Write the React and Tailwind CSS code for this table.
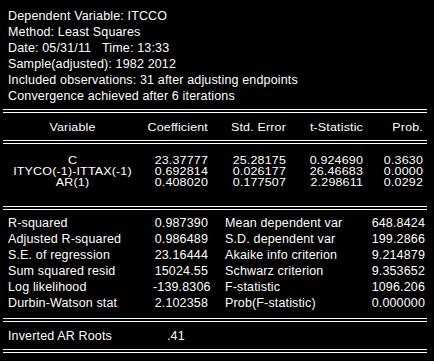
import React from "react";

const font = { fontFamily: '"Liberation Sans", Arial, sans-serif' };

function DoubleLine({ className = "" }) {
  return <div className={"mx-[3px] w-[424px] h-[4px] border-t border-b border-white " + className} />;
}

const coefRows = [
  ["C", "23.37777", "25.28175", "0.924690", "0.3630"],
  ["ITYCO(-1)-ITTAX(-1)", "0.692814", "0.026177", "26.46683", "0.0000"],
  ["AR(1)", "0.408020", "0.177507", "2.298611", "0.0292"],
];

const statRows = [
  ["R-squared", "0.987390", "Mean dependent var", "648.8424"],
  ["Adjusted R-squared", "0.986489", "S.D. dependent var", "199.2866"],
  ["S.E. of regression", "23.16444", "Akaike info criterion", "9.214879"],
  ["Sum squared resid", "15024.55", "Schwarz criterion", "9.353652"],
  ["Log likelihood", "-139.8306", "F-statistic", "1096.206"],
  ["Durbin-Watson stat", "2.102358", "Prob(F-statistic)", "0.000000"],
];

export default function App() {
  return (
    <div
      className="w-[434px] h-[361px] bg-black text-white text-[12.5px] tracking-[0.15px] overflow-hidden flex flex-col"
      style={font}
    >
      <div className="pt-[8px] pl-[8px] leading-[16px] whitespace-nowrap">
        <div>Dependent Variable: ITCCO</div>
        <div>Method: Least Squares</div>
        <div>Date: 05/31/11&nbsp;&nbsp;&nbsp;Time: 13:33</div>
        <div>Sample(adjusted): 1982 2012</div>
        <div>Included observations: 31 after adjusting endpoints</div>
        <div>Convergence achieved after 6 iterations</div>
      </div>

      <DoubleLine className="mt-[5px]" />

      <div className="mx-[3px] h-[27px] pt-[7px]">
        <div className="grid grid-cols-[139px_66px_78px_77px_60px] leading-[16px] whitespace-nowrap scale-y-[0.8] origin-center">
          <div className="text-center">Variable</div>
          <div className="text-right">Coefficient</div>
          <div className="text-right">Std. Error</div>
          <div className="text-right">t-Statistic</div>
          <div className="text-right">Prob.</div>
        </div>
      </div>

      <DoubleLine />

      <div className="mx-[3px] pt-[11px] pb-[18px] whitespace-nowrap">
        {coefRows.map((r) => (
          <div key={r[0]} className="h-[11px]">
            <div className="grid grid-cols-[139px_66px_78px_77px_60px] leading-[14px] scale-y-[0.8] origin-top">
              <div className="text-center">{r[0]}</div>
              <div className="text-right">{r[1]}</div>
              <div className="text-right">{r[2]}</div>
              <div className="text-right">{r[3]}</div>
              <div className="text-right">{r[4]}</div>
            </div>
          </div>
        ))}
      </div>

      <DoubleLine />

      <div className="mx-[3px] pt-[5px] pb-[7px] leading-[16px] whitespace-nowrap">
        {statRows.map((r) => (
          <div key={r[0]} className="grid grid-cols-[150px_55px_152px_65px]">
            <div className="pl-[5px]">{r[0]}</div>
            <div className="text-right">{r[1]}</div>
            <div className="pl-[17px]">{r[2]}</div>
            <div className="text-right">{r[3]}</div>
          </div>
        ))}
      </div>

      <DoubleLine />

      <div className="mx-[3px] pt-[6px] pb-[5px] leading-[16px] whitespace-nowrap grid grid-cols-[164px_1fr]">
        <div className="pl-[5px]">Inverted AR Roots</div>
        <div>.41</div>
      </div>

      <DoubleLine />
    </div>
  );
}
